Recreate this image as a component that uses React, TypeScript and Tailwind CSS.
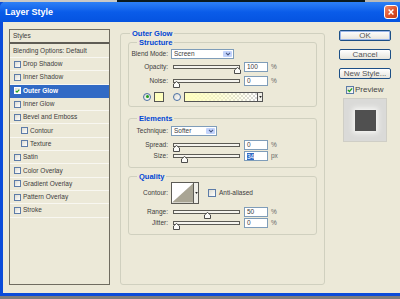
import React from "react";

function Check({ checked, className = "" }: { checked?: boolean; className?: string }) {
  return (
    <span
      className={`flex h-[7px] w-[7px] shrink-0 items-center justify-center border border-[#5d7ca8] bg-gradient-to-br from-[#dcdbd2] to-white ${className}`}
    >
      {checked && (
        <svg viewBox="0 0 7 7" className="h-[6px] w-[6px]">
          <path d="M1 3.4 L2.8 5.2 L6 1.6" stroke="#21a121" strokeWidth="1.5" fill="none" />
        </svg>
      )}
    </span>
  );
}

function Radio({ on, className = "" }: { on?: boolean; className?: string }) {
  return (
    <span
      className={`flex h-[8px] w-[8px] shrink-0 items-center justify-center rounded-full border border-[#4a6fa5] bg-gradient-to-br from-[#dcdbd2] to-white ${className}`}
    >
      {on && <span className="h-[3px] w-[3px] rounded-full bg-[#1f9a1f]" />}
    </span>
  );
}

function Arrow() {
  return (
    <svg viewBox="0 0 7 5" className="h-[4px] w-[6px]">
      <path d="M1 1 L3.5 3.6 L6 1" stroke="#4a5a86" strokeWidth="1.3" fill="none" />
    </svg>
  );
}

function Select({ text, className }: { text: string; className: string }) {
  return (
    <div className={`ml-[3px] flex h-[10px] items-stretch border border-[#7f9db9] bg-white ${className}`}>
      <span className="flex-1 pl-[2px] leading-[8px]">{text}</span>
      <span className="m-[1px] flex w-[9px] items-center justify-center rounded-[1px] bg-[#c2d3fc]">
        <Arrow />
      </span>
    </div>
  );
}

function Slider({ pct }: { pct: number }) {
  return (
    <div className="relative ml-[5px] h-[4px] w-[67px] border border-[#5c5b55] bg-[#f5f4ee]">
      <svg
        viewBox="0 0 7 7"
        className="absolute top-[1px] h-[7px] w-[7px]"
        style={{ left: `${pct * 0.61 - 1}px` }}
      >
        <path d="M3.5 0.5 L6.5 3 L6.5 6.5 L0.5 6.5 L0.5 3 Z" fill="#fbfbf8" stroke="#3a3a3a" strokeWidth="0.9" />
      </svg>
    </div>
  );
}

function Field({ value, selected }: { value: string; selected?: boolean }) {
  return (
    <div className="ml-[4px] flex h-[10px] w-[24px] items-center border border-[#7f9db9] bg-white pl-[2px]">
      {selected ? <span className="bg-[#316ac5] leading-[7px] text-white">{value}</span> : <span>{value}</span>}
    </div>
  );
}

function SliderRow({
  label,
  pct,
  value,
  unit,
  selected,
  className = "",
}: {
  label: string;
  pct: number;
  value: string;
  unit: string;
  selected?: boolean;
  className?: string;
}) {
  return (
    <div className={`flex h-[10px] items-center ${className}`}>
      <span className="w-[39px] text-right">{label}</span>
      <Slider pct={pct} />
      <Field value={value} selected={selected} />
      <span className="ml-[3px] text-[#666]">{unit}</span>
    </div>
  );
}

function Group({ title, className = "", children }: { title: string; className?: string; children: React.ReactNode }) {
  return (
    <fieldset className={`rounded-[3px] border border-[#d0d0bf] ${className}`}>
      <legend className="ml-[8px] px-[2px] text-[7.5px] font-bold leading-[9px] text-[#0046d5]">{title}</legend>
      {children}
    </fieldset>
  );
}

const styles: { name: string; indent?: boolean; on?: boolean }[] = [
  { name: "Drop Shadow" },
  { name: "Inner Shadow" },
  { name: "Outer Glow", on: true },
  { name: "Inner Glow" },
  { name: "Bevel and Emboss" },
  { name: "Contour", indent: true },
  { name: "Texture", indent: true },
  { name: "Satin" },
  { name: "Color Overlay" },
  { name: "Gradient Overlay" },
  { name: "Pattern Overlay" },
  { name: "Stroke" },
];

function XpButton({ label, main }: { label: string; main?: boolean }) {
  return (
    <button
      type="button"
      className={`flex h-[11px] w-[52px] items-center justify-center rounded-[2px] border border-[#1c4f86] bg-gradient-to-b from-white to-[#e6e4dc] text-[8px] leading-[9px] text-[#555] ${
        main ? "shadow-[inset_0_0_0_1px_#9bb6ea]" : ""
      }`}
    >
      {label}
    </button>
  );
}

export default function App() {
  return (
    <div className="flex h-[299px] w-[400px] flex-col overflow-hidden bg-[#7d7d7d] font-['Liberation_Sans',Arial,sans-serif] text-[6.5px] leading-[8px] text-[#3c3c3c]">
      <div className="flex h-[2px]">
        <div className="w-[117px] bg-[#c9c9c6]" />
        <div className="flex-1 bg-[#0b1a1d]" />
        <div className="w-[35px] bg-[#b9bab8]" />
      </div>
      <div className="flex flex-1 flex-col border-b-[3px] border-l-[3px] border-[#0a4bd9]">
        <div className="-ml-[3px] flex h-[20px] items-center rounded-tl-[5px] bg-gradient-to-b from-[#2d80f6] via-[#0a5ce9] to-[#0553e0] pl-[5px] pr-[2px]">
          <span className="flex-1 text-[9px] font-bold leading-[11px] text-white">Layer Style</span>
          <span className="flex h-[14px] w-[14px] items-center justify-center rounded-[3px] border border-white bg-gradient-to-br from-[#f08a6a] via-[#e0552f] to-[#c23a12]">
            <svg viewBox="0 0 10 10" className="h-[8px] w-[8px]">
              <path d="M2 2 L8 8 M8 2 L2 8" stroke="white" strokeWidth="1.8" />
            </svg>
          </span>
        </div>
        <div className="flex flex-1 bg-[#ece9d8] pb-[8px] pl-[6px] pt-[7px]">
          {/* styles list */}
          <div className="w-[101px] border border-[#6f6c60] bg-[#ece9d8]">
            <div className="flex h-[14px] items-center border-b-2 border-[#5f5d55] pl-[3px]">Styles</div>
            <div className="flex h-[14px] items-center border-b border-[#f8f7f1] pl-[3px]">Blending Options: Default</div>
            {styles.map((s) => (
              <div
                key={s.name}
                className={`flex h-[13.3px] items-center gap-[2px] border-b ${
                  s.on ? "border-[#316ac5] bg-[#316ac5] font-bold text-white" : "border-[#f8f7f1]"
                } ${s.indent ? "pl-[11px]" : "pl-[4px]"}`}
              >
                <Check checked={s.on} className={s.on ? "border-white" : ""} />
                <span>{s.name}</span>
              </div>
            ))}
          </div>

          {/* settings */}
          <fieldset className="ml-[10px] w-[205px] rounded-[3px] border border-[#d0d0bf] pl-[7px] pr-[7px]">
            <legend className="ml-[2px] px-[2px] text-[7.5px] font-bold leading-[9px] text-[#0046d5]">Outer Glow</legend>

            <Group title="Structure" className="pb-[4px]">
              <div className="mt-[2px] flex h-[10px] items-center">
                <span className="w-[39px] text-right">Blend Mode:</span>
                <Select text="Screen" className="w-[63px]" />
              </div>
              <SliderRow className="mt-[3px]" label="Opacity:" pct={100} value="100" unit="%" />
              <SliderRow className="mt-[4px]" label="Noise:" pct={0} value="0" unit="%" />
              <div className="mt-[5px] flex h-[11px] items-center">
                <Radio on className="ml-[14px]" />
                <span className="ml-[3px] h-[10px] w-[10px] border border-[#555] bg-[#ffffbe]" />
                <Radio className="ml-[9px]" />
                <div className="ml-[3px] flex h-[10px] w-[79px] border border-[#555]">
                  <div className="flex-1 bg-[conic-gradient(#d6d6d6_25%,#ffffff_0_50%,#d6d6d6_0_75%,#ffffff_0)] bg-[length:4px_4px]">
                    <div className="h-full w-full bg-gradient-to-r from-[#ffffbe] via-[#ffffbe]/60 to-transparent" />
                  </div>
                  <span className="flex w-[5px] items-center justify-center border-l border-[#555] bg-[#f0efe8]">
                    <svg viewBox="0 0 4 3" className="h-[2px] w-[3px]">
                      <path d="M0 0 L4 0 L2 3 Z" fill="#222" />
                    </svg>
                  </span>
                </div>
              </div>
            </Group>

            <Group title="Elements" className="mt-[7px] pb-[6px]">
              <div className="mt-[2px] flex h-[11px] items-center">
                <span className="w-[39px] text-right">Technique:</span>
                <Select text="Softer" className="w-[46px]" />
              </div>
              <SliderRow className="mt-[4px]" label="Spread:" pct={0} value="0" unit="%" />
              <SliderRow className="mt-[1px]" label="Size:" pct={13.6} value="34" unit="px" selected />
            </Group>

            <Group title="Quality" className="mt-[4px] pb-[6px]">
              <div className="mt-[1px] flex h-[22px] items-center">
                <span className="w-[39px] text-right">Contour:</span>
                <div className="ml-[3px] flex h-[22px] border border-[#5c5b55]">
                  <svg viewBox="0 0 22 20" className="h-[20px] w-[21px] bg-white">
                    <path d="M0 20 L22 0 L22 20 Z" fill="#a9a594" />
                  </svg>
                  <span className="flex w-[5px] items-center justify-center border-l border-[#5c5b55] bg-[#f0efe8]">
                    <svg viewBox="0 0 4 3" className="h-[2px] w-[3px]">
                      <path d="M0 0 L4 0 L2 3 Z" fill="#222" />
                    </svg>
                  </span>
                </div>
                <Check className="ml-[9px] h-[8px] w-[8px]" />
                <span className="ml-[3px]">Anti-aliased</span>
              </div>
              <SliderRow className="mt-[3px]" label="Range:" pct={50} value="50" unit="%" />
              <SliderRow className="mt-[1px]" label="Jitter:" pct={0} value="0" unit="%" />
            </Group>
          </fieldset>

          {/* buttons */}
          <div className="ml-[14px] mt-[1px] flex w-[52px] flex-col gap-[8px]">
            <XpButton label="OK" main />
            <XpButton label="Cancel" />
            <XpButton label="New Style..." />
            <div className="-mt-[1px] flex h-[8px] items-center pl-[7px] text-[8px]">
              <Check checked className="h-[8px] w-[8px]" />
              <span className="ml-[1px] text-[#444]">Preview</span>
            </div>
            <div className="-mt-[4px] ml-[4px] flex h-[44px] w-[44px] items-center justify-center border border-[#cfcec6] bg-[#dadad8]">
              <div className="h-[21px] w-[21px] bg-[#505050] shadow-[0_0_5px_2px_#f7f7f5]" />
            </div>
          </div>
        </div>
      </div>
      <div className="h-[3px]" />
    </div>
  );
}
